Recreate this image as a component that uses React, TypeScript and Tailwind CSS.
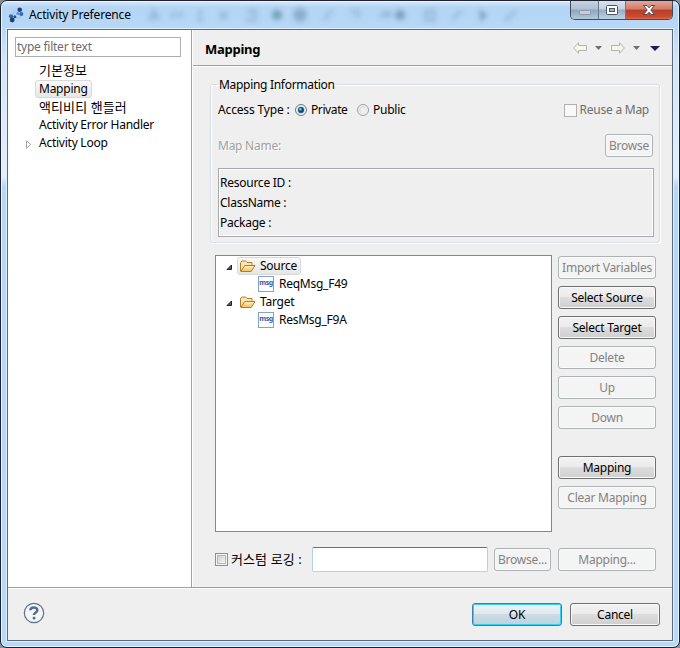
import type { ReactNode } from "react";
import clsx from "clsx";

const Button = ({
  children,
  disabled,
  primary,
  className,
}: {
  children: ReactNode;
  disabled?: boolean;
  primary?: boolean;
  className?: string;
}) => (
  <button
    className={clsx(
      "flex h-[23px] shrink-0 items-center justify-center rounded-[3px] border whitespace-nowrap",
      disabled && "border-[#adb2b5] bg-[#f4f4f4] text-[#838383] shadow-[inset_0_0_0_1px_#fbfbfb]",
      primary &&
        "border-[#3c7fb1] bg-[linear-gradient(#eef3f6_0%,#dfe8ed_48%,#cddbe4_50%,#bdd3e0_100%)] shadow-[inset_0_0_0_1px_#35d0f8]",
      !disabled &&
        !primary &&
        "border-[#707070] bg-[linear-gradient(#f2f2f2_0%,#ebebeb_48%,#dddddd_50%,#cfcfcf_100%)] shadow-[inset_0_0_0_1px_#fafafa]",
      className
    )}
  >
    {children}
  </button>
);

const FolderIcon = () => (
  <svg width="16" height="16" viewBox="0 0 16 16" className="shrink-0">
    <defs>
      <linearGradient id="folder" x1="0" y1="0" x2="0" y2="1">
        <stop offset="0" stopColor="#fff3c4" />
        <stop offset="1" stopColor="#f3bf5a" />
      </linearGradient>
    </defs>
    <path d="M.5 13V4.500L2 3h3.500L7 4.500h5V7.500" fill="#fbe6ad" stroke="#b67b2c" />
    <path d="M.8 13.500L4.800 7.500H15L11.200 13.500Z" fill="url(#folder)" stroke="#b67b2c" />
  </svg>
);

const MsgIcon = () => (
  <span className="flex h-4 w-4 shrink-0 justify-center border border-[#86a3c3] bg-[#fbfdff] text-[7px] leading-[11px] font-bold tracking-[-0.4px] text-[#3a5ba5]">
    msg
  </span>
);

const OpenArrow = () => (
  <svg width="7" height="7" viewBox="0 0 7 7" className="mt-[2px] shrink-0">
    <path d="M5.500 1V5.500H1Z" fill="#595959" stroke="#262626" />
  </svg>
);

const BackArrow = ({ className }: { className?: string }) => (
  <svg width="14" height="12" viewBox="0 0 14 12" className={className}>
    <path d="M.7 6L5.500 .7V3.500H13.500V8.500H5.500V11.300Z" fill="#f6f6ee" stroke="#b5b5ac" />
  </svg>
);

const Caret = ({ className }: { className?: string }) => (
  <svg width="7" height="4" viewBox="0 0 7 4" className={className}>
    <path d="M0 0H7L3.500 4Z" fill="currentColor" />
  </svg>
);

const Radio = ({ checked, className }: { checked?: boolean; className?: string }) => (
  <svg width="12" height="12" viewBox="0 0 12 12" className={className}>
    <circle cx="6" cy="6" r="5.500" fill="#f4f4f4" stroke={checked ? "#6f7780" : "#9a9da0"} />
    <circle cx="6" cy="6" r="4" fill={checked ? "#c8d8e2" : "#dcdfe1"} />
    {checked ? (
      <>
        <circle cx="6" cy="6" r="3" fill="#14496f" />
        <circle cx="5.300" cy="5.300" r="1.400" fill="#54bfe8" />
      </>
    ) : (
      <circle cx="6.500" cy="6.500" r="3" fill="#efefef" />
    )}
  </svg>
);

// toolbar of the window behind, seen through the glass title bar
const Glass = () => (
  <svg width="664" height="28" viewBox="0 0 664 28" className="absolute top-0 left-0 blur-[2.5px]">
    <g fill="none" stroke="#6688aa" strokeWidth="3" opacity=".4">
      <path d="M143 17l4-7 4 7z M163 14h14 M193 9v12 M213 11l7 7 M220 11l-7 7 M240 10h8v9h-10" />
      <path d="M317 19l4-6 5-3 M344 11c8-3 10 2 5 6 M446 19l4-6 5-3 M498 20l5-5 6-5" />
      <path d="M372 14h13l-6-3v6 M419 10h8v9h-8z" />
    </g>
    <g fill="#4b7291" opacity=".55">
      <circle cx="270" cy="14" r="5" fill="#35787e" />
      <circle cx="293" cy="14" r="7" opacity=".7" />
      <circle cx="393" cy="14" r="5" />
      <path d="M473 8l8 7-4 1-2 5-2-2z" />
    </g>
  </svg>
);

const TitleBar = () => (
  <div className="relative flex h-7 items-start justify-between">
    <Glass />
    <div className="relative flex h-7 items-center gap-[5px] pl-px">
      <svg width="16" height="16" viewBox="0 0 16 16">
        <path d="M4.500 8C4 6.500 5.500 5 8 4.500M12.500 9c-.5 1.500-2 2-4.500 2" fill="none" stroke="#a9c6e8" strokeWidth="1.500" />
        <circle cx="11.700" cy="2.700" r="2.300" fill="#223f70" />
        <circle cx="13.300" cy="7" r="2.100" fill="#2f6cc4" />
        <circle cx="9.800" cy="6.500" r="1.500" fill="#5f8fd0" />
        <circle cx="3" cy="9.300" r="2" fill="#2d62ac" />
        <circle cx="4.200" cy="13" r="2.400" fill="#223f70" />
        <circle cx="6.800" cy="9.800" r="1.500" fill="#2d4f86" />
      </svg>
      <span className="leading-4 tracking-[-0.15px]">Activity Preference</span>
    </div>
    <div className="relative flex h-[19px] w-[103px] overflow-hidden rounded-b-[5px] border border-t-0 border-[#414b5b]">
      <span className="flex w-7 items-center justify-center border-r border-[#68788b] bg-[linear-gradient(#c5d3e2_0%,#b0c0d2_45%,#91a5bb_50%,#b2c8de_100%)]">
        <svg width="12" height="5" viewBox="0 0 12 5" className="mt-[5px]">
          <rect x=".5" y=".5" width="11" height="4" rx="1" fill="#c5cfd9" stroke="#8b98a6" />
        </svg>
      </span>
      <span className="flex w-[27px] items-center justify-center border-r border-[#68788b] bg-[linear-gradient(#d8e3ef_0%,#c2d0e0_45%,#98abc2_50%,#bcd3ea_100%)]">
        <svg width="12" height="10" viewBox="0 0 12 10">
          <rect x=".5" y=".5" width="11" height="9" rx="1" fill="#fff" stroke="#4a5365" />
          <rect x="3.500" y="3.500" width="5" height="3" fill="#a6b6c8" stroke="#4a5365" />
        </svg>
      </span>
      <span className="flex flex-1 items-center justify-center bg-[linear-gradient(#e6a698_0%,#d37b6b_45%,#b93e27_50%,#c9492f_85%,#d8684a_100%)]">
        <svg width="12" height="10" viewBox="0 0 12 10">
          <path d="M.5.5h3.500l2 2.300 2-2.300h3.500L7.800 5l3.700 4.500H8L6 7.200 4 9.500H.5L4.200 5Z" fill="#fff" stroke="#584650" />
        </svg>
      </span>
    </div>
  </div>
);

const Sidebar = () => (
  <div className="w-[184px] border-r border-[#a0a0a0] bg-white pt-[7px] pl-[7px]">
    <div className="mb-[5px] flex h-5 w-[166px] items-center border border-[#abadb3] pl-px leading-4 text-[#6d6d6d]">
      type filter text
    </div>
    <ul className="pl-[10px] leading-[18px]">
      <li className="h-[18px] pl-[14px] text-[13px] leading-4 tracking-normal">기본정보</li>
      <li className="flex pl-[10px]">
        <span className="h-[18px] rounded-[3px] border border-[#d9d9d9] bg-linear-to-b from-[#fafafa] to-[#e6e6e6] px-[3px] leading-4">
          Mapping
        </span>
      </li>
      <li className="h-[18px] pl-[14px] text-[13px] tracking-[0.1px]">액티비티 핸들러</li>
      <li className="pl-[14px]">Activity Error Handler</li>
      <li className="flex items-center">
        <svg width="7" height="9" viewBox="0 0 7 9" className="mt-[2px] mr-[7px]">
          <path d="M1.500 .8V8.200L5.800 4.500Z" fill="#fff" stroke="#a6a6a6" />
        </svg>
        Activity Loop
      </li>
    </ul>
  </div>
);

const MappingInfo = () => (
  <fieldset className="mr-3 ml-[17px] h-[168px] rounded-[3px] border border-[#d5dfe5] px-[7px] shadow-[inset_1px_1px_0_#fff,1px_1px_0_#fff]">
    <legend className="h-[18px] px-px leading-[20px] tracking-[-0.3px]">Mapping Information</legend>
    <div className="flex h-[34px] items-center">
      <span className="w-[77px] tracking-[-0.15px]">Access Type :</span>
      <Radio checked />
      <span className="ml-1 w-[46px] tracking-[-0.4px]">Private</span>
      <Radio />
      <span className="ml-1">Public</span>
      <span className="ml-auto h-[13px] w-[13px] border border-[#b1b1b1] bg-[#f9f9f9]" />
      <span className="mr-[3px] ml-[3px] text-[#6d6d6d]">Reuse a Map</span>
    </div>
    <div className="mt-[7px] flex items-center justify-between">
      <span className="text-[#a0a0a0] [text-shadow:1px_1px_0_#fff]">Map Name:</span>
      <Button disabled className="mr-[-1px] w-12">
        Browse
      </Button>
    </div>
    <div className="mt-[11px] mr-[-2px] h-[69px] border border-[#a7a9b0] pt-1 pl-px leading-5 shadow-[inset_-1px_-1px_0_#fff,inset_1px_1px_0_#fff]">
      <p>Resource ID :</p>
      <p>ClassName :</p>
      <p>Package :</p>
    </div>
  </fieldset>
);

const TreeGroup = ({ name, child, selected }: { name: string; child: string; selected?: boolean }) => (
  <>
    <div className="flex h-[18px] items-center pl-[10px]">
      <OpenArrow />
      <div
        className={clsx(
          "ml-1 flex h-[18px] items-center gap-1 rounded-[3px] border px-[3px] pl-[2px] leading-4",
          selected ? "border-[#d9d9d9] bg-linear-to-b from-[#fafafa] to-[#e6e6e6]" : "border-transparent"
        )}
      >
        <FolderIcon />
        {name}
      </div>
    </div>
    <div className="flex h-[18px] items-center gap-[5px] pl-[42px]">
      <MsgIcon />
      {child}
    </div>
  </>
);

const MappingPage = () => (
  <div className="flex flex-1 flex-col border-l border-white">
    <div className="flex h-9 items-center border-b border-[#a0a0a0] pr-3 pl-3">
      <h1 className="mt-[3px] text-[13px] font-bold">Mapping</h1>
      <BackArrow className="mt-px ml-auto" />
      <Caret className="mt-px ml-2 text-[#707070]" />
      <BackArrow className="mt-px ml-[9px] -scale-x-100" />
      <Caret className="mt-px ml-2 text-[#707070]" />
      <svg width="10" height="5" viewBox="0 0 10 5" className="mt-[2px] ml-[10px]">
        <path d="M0 0H10L5 5Z" fill="#211c4d" />
      </svg>
    </div>
    <div className="h-[9px] border-t border-white" />
    <MappingInfo />
    <div className="mt-3 flex pr-4 pl-[22px]">
      <div className="h-[277px] w-[337px] border border-[#828790] bg-white pt-px">
        <TreeGroup name="Source" child="ReqMsg_F49" selected />
        <TreeGroup name="Target" child="ResMsg_F9A" />
      </div>
      <div className="ml-[6px] flex flex-1 flex-col gap-[7px] pt-px">
        <Button disabled>Import Variables</Button>
        <Button>Select Source</Button>
        <Button>Select Target</Button>
        <Button disabled>Delete</Button>
        <Button disabled>Up</Button>
        <Button disabled>Down</Button>
        <Button className="mt-5">Mapping</Button>
        <Button disabled>Clear Mapping</Button>
      </div>
    </div>
    <div className="mt-[15px] flex items-center pr-4 pl-[22px]">
      <span className="flex h-[13px] w-[13px] border border-[#8e8f8f] bg-[#f4f4f4] p-px">
        <span className="flex-1 border border-[#b4b8bd] bg-linear-to-br from-[#cdd1d6] to-[#f6f6f6]" />
      </span>
      <span className="mb-[2px] ml-[3px] w-[81px] text-[13px] tracking-[0.1px] whitespace-nowrap">커스텀 로깅 :</span>
      <input className="h-[25px] w-44 rounded-[2px] border border-[#b5cfe7] border-t-[#3d7bad] bg-white" />
      <Button disabled className="ml-[6px] w-[57px]">
        Browse...
      </Button>
      <Button disabled className="ml-[7px] flex-1">
        Mapping...
      </Button>
    </div>
  </div>
);

const App = () => (
  <div className="h-[648px] w-[680px] bg-[#8a8f96] font-['Noto_Sans','Noto_Sans_CJK_KR',sans-serif] text-[12px] leading-4 tracking-[-0.25px] text-black">
    <div className="h-full overflow-hidden rounded-[7px] border border-[#1d2330] bg-[linear-gradient(#dbe9f8_0px,#b5d5f5_6px,#b7d7f7_24px,#d3e6fa_60px,#e2effc_176px,#b4d6f9_185px,#b9d9fb_100%)] px-[6px] shadow-[inset_0_0_0_1px_#e8f4ff]">
      <TitleBar />
      <div className="flex h-[612px] flex-col border border-[#5b6a7b] bg-[#efefef] shadow-[0_0_0_1px_#dff0ff]">
        <div className="flex h-[558px] border-b border-[#a0a0a0]">
          <Sidebar />
          <MappingPage />
        </div>
        <div className="flex flex-1 items-center border-t border-white pr-3 pl-[15px]">
          <svg width="22" height="22" viewBox="0 0 22 22" className="mb-1">
            <circle cx="11" cy="11" r="9.700" fill="#f4f5f7" stroke="#5f7190" strokeWidth="1.200" />
            <path d="M7.300 8.200C7.500 4.500 14.500 4.600 14.400 8.200C14.300 10.500 11 10.500 11 13" fill="none" stroke="#566b91" strokeWidth="2.400" />
            <rect x="9.700" y="14.700" width="2.700" height="2.700" rx="1" fill="#566b91" />
          </svg>
          <Button primary className="ml-auto w-[90px]">
            OK
          </Button>
          <Button className="ml-2 w-[90px]">Cancel</Button>
        </div>
      </div>
    </div>
  </div>
);

export default App;
